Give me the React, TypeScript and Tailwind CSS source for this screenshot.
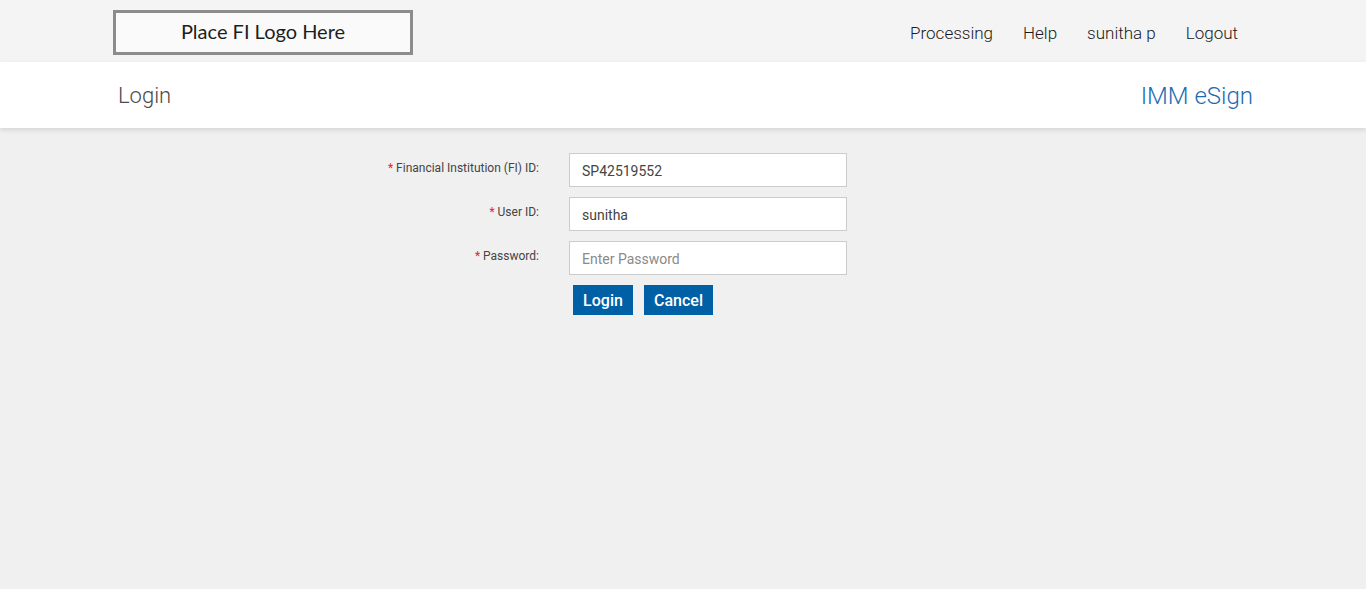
export default function App() {
  const fields = [
    { label: "Financial Institution (FI) ID:", value: "SP42519552", placeholder: "" },
    { label: "User ID:", value: "sunitha", placeholder: "" },
    { label: "Password:", value: "", placeholder: "Enter Password" },
  ];

  return (
    <div className="min-h-screen w-full bg-[#f0f0f0] font-['Roboto',sans-serif]">
      {/* top bar */}
      <header className="h-[62px] bg-[#f4f4f4]">
        <div className="mx-auto flex h-full w-[1140px] items-start justify-between pt-[10px]">
          <div className="flex h-[45px] w-[300px] items-center justify-center border-[3px] border-[#8c8c8c] bg-[#fafafa] pb-[3px] font-['Lato',sans-serif] text-[20px] text-[#1e1e1e]">
            Place FI Logo Here
          </div>
          <nav className="mr-[15px] mt-[11px] flex items-center gap-[30px] text-[17px] font-light text-[#1a1a1a]">
            <a>Processing</a>
            <a>Help</a>
            <a>sunitha p</a>
            <a>Logout</a>
          </nav>
        </div>
      </header>

      {/* title bar */}
      <div className="relative z-10 h-[66px] bg-white shadow-[0_2px_5px_rgba(0,0,0,0.12)]">
        <div className="mx-auto flex h-full w-[1140px] items-center justify-between pl-[5px] pt-[1px]">
          <h1 className="text-[22px] font-light text-[#4a4a4a]">Login</h1>
          <span className="text-[24px] font-light text-[#1c6cb3]">IMM eSign</span>
        </div>
      </div>

      {/* form */}
      <div className="mx-auto w-[1140px] pt-[25px]">
        <div className="flex flex-col gap-[10px]">
          {fields.map((f) => (
            <div key={f.label} className="flex items-start">
              <label className="w-[426px] pt-[6px] text-right text-[12px] text-[#444]">
                <span className="mr-[3px] text-[#e0242a]">*</span>
                {f.label}
              </label>
              <input
                type={f.placeholder ? "password" : "text"}
                defaultValue={f.value}
                placeholder={f.placeholder}
                className="ml-[30px] h-[34px] w-[278px] border border-[#cccccc] bg-white px-[12px] pt-[2px] text-[14px] text-[#444] placeholder:text-[#8a8a8a] outline-none"
              />
            </div>
          ))}
        </div>
        <div className="ml-[460px] mt-[10px] flex gap-[11px]">
          <button className="h-[30px] w-[60px] bg-[#0060a6] pt-[1px] text-[16px] font-medium text-white">Login</button>
          <button className="h-[30px] w-[69px] bg-[#0060a6] pt-[1px] text-[16px] font-medium text-white">Cancel</button>
        </div>
      </div>
    </div>
  );
}
